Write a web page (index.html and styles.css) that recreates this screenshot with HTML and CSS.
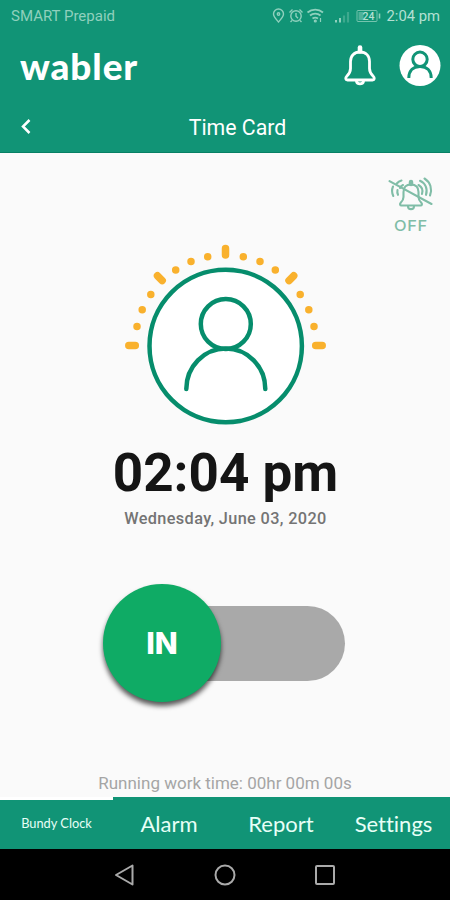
FILE: index.html
```
<!DOCTYPE html>
<html lang="en">
<head>
<meta charset="utf-8">
<title>Time Card</title>
<link rel="stylesheet" href="styles.css">
</head>
<body>
<div class="app">
  <header class="header">
    <div class="status">
      <span class="carrier">SMART Prepaid</span>
      <svg class="status-icons" width="110" height="20" viewBox="0 0 110 20" fill="none" stroke="#8fd0bd" stroke-width="1.4">
        <path d="M6.500 16C3 12 1.500 10.500 1.500 8a5 5 0 0 1 10 0c0 2.500-1.500 4-5 8z"/><circle cx="6.500" cy="8" r="1.200"/>
        <circle cx="24" cy="10" r="5.200"/><path d="M24 7v3.200l2 2M17.500 6.500l3-3M30.500 6.500l-3-3M20 14.500l-1.500 1.500M28 14.500l1.500 1.500"/>
        <path d="M35.500 6.500a12 12 0 0 1 15.500 0M38 9.500a8 8 0 0 1 10.500 0M40.500 12.500a5 5 0 0 1 5.500 0" stroke-width="1.800"/><circle cx="43.300" cy="15" r=".9"/><path d="M48.500 12v4" stroke-width="1.200"/>
        <path d="M64 14v2.500M68 12v4.500" stroke-width="2"/><path d="M72 9.500v7M76 6v10.500" stroke-width="2.200" opacity=".35"/>
        <rect x="85" y="4.500" width="20" height="11" rx="1" stroke-width="1" opacity=".8"/><rect x="86.500" y="6" width="5" height="8" fill="#8fd0bd" stroke="none" opacity=".5"/><path d="M107.500 7.500v5" stroke-width="1.600"/>
        <text class="battery" x="90.500" y="14">24</text>
      </svg>
      <span class="clock">2:04 pm</span>
    </div>
    <div class="brandbar">
      <span class="logo">wabler</span>
      <svg class="bell" width="32" height="42" viewBox="0 0 32 42" fill="none" stroke="#fff" stroke-width="2.800" stroke-linejoin="round" stroke-linecap="round">
        <path d="M16 2.500v4" stroke-width="4.600"/><path d="M16 7c-6 0-9.500 4-9.500 9.500v7c0 4-1.500 5.500-3.500 7.500-2 2-1.500 4 .5 4h25c2 0 2.500-2 .5-4-2-2-3.500-3.500-3.500-7.500v-7C25.500 11 22 7 16 7z"/><path d="M12.500 36.500a3.600 3 0 0 0 7 0"/>
      </svg>
      <svg class="avatar" width="42" height="42" viewBox="0 0 42 42" fill="none" stroke="#119476" stroke-width="3">
        <circle cx="21" cy="20.500" r="20.500" fill="#fff" stroke="none"/><circle cx="21" cy="14.300" r="7.200"/><path d="M9.800 33C9.800 25.500 14.500 21.500 21 21.500S32.200 25.500 32.200 33"/>
      </svg>
    </div>
    <div class="titlebar">
      <svg class="back" width="12" height="16" viewBox="0 0 12 16" fill="none" stroke="#fff" stroke-width="2.500"><path d="M9.500 1 3 7.500 9.500 14"/></svg>
      <h1>Time Card</h1>
    </div>
  </header>
  <main class="main">
    <div class="alarm-state">
      <svg width="46" height="36" viewBox="0 0 46 36" fill="none" stroke="#80bda7" stroke-width="2.100" stroke-linecap="round" stroke-linejoin="round">
        <path d="M23 6v2" stroke-width="4.500"/>
        <path d="M23 8.500c-5 0-7.500 3-7.500 7.500v5c0 3-1 4-2.800 5.800-1.200 1.300-.7 2.700.8 2.700h19c1.500 0 2-1.400.8-2.700-1.800-1.800-2.800-2.800-2.800-5.800v-5c0-4.500-2.500-7.500-7.500-7.500zM20 30.500a3 2.600 0 0 0 6 0"/>
        <path d="M13.500 4.500c-2 .5-3.500 1.500-4.700 3M15 9c-1.500.7-2.500 1.700-3 3M5 10.500c-1.300 3-1.200 6.500.3 9.500M9.500 14c-.4 1.800-.2 3.300.5 4.800"/>
        <path d="M30.500 9c3.300 1.800 4.700 5.300 3.500 9M32 4.800c5.300 2.200 8 8 6 14"/>
        <path d="M36.500 2.500c6 3.800 8 10.500 5.500 17"/>
        <path d="M1.500 5.200 43.500 28"/>
      </svg>
      <span>OFF</span>
    </div>
    <svg class="person" width="210" height="190" viewBox="120 240 210 190" fill="none" stroke="#068d6c" stroke-width="4.500">
      <g stroke="#f9b12d" stroke-width="7.500" stroke-linecap="round">
        <path d="M225.500 248.500v6.500M128.800 345.500h6.500M315.700 345.500h6.500M157.500 275.800l4.700 4.800M293.700 275.800l-4.700 4.800"/>
        <path d="M137 326.500h.01M142.200 309.700h.01M150.800 294.500h.01M175.700 269.900h.01M191 261.500h.01M207.700 256.700h.01M243.300 256.700h.01M260 261.500h.01M275.300 269.900h.01M300.200 294.500h.01M308.800 309.700h.01M314 326.500h.01"/>
      </g>
      <circle cx="225.700" cy="346" r="76.200" fill="#fff"/>
      <circle cx="225.800" cy="324" r="25"/>
      <path d="M186.300 389a39.500 40.500 0 0 1 79 0" stroke-linecap="round"/>
    </svg>
    <div class="time">02:04 pm</div>
    <div class="date">Wednesday, June 03, 2020</div>
    <div class="switch"><div class="knob">IN</div></div>
    <div class="running">Running work time: 00hr 00m 00s</div>
  </main>
  <nav class="tabs">
    <span class="tab active">Bundy Clock</span>
    <span class="tab">Alarm</span>
    <span class="tab">Report</span>
    <span class="tab">Settings</span>
  </nav>
  <footer class="system">
    <svg width="22" height="24" viewBox="0 0 22 24"><path d="M2 12 18.500 2.500v19z"/></svg>
    <svg width="22" height="24" viewBox="0 0 22 24"><circle cx="11" cy="12" r="9.500"/></svg>
    <svg width="22" height="24" viewBox="0 0 22 24"><rect x="2" y="3" width="18" height="18" rx="1"/></svg>
  </footer>
</div>
</body>
</html>
```
FILE: styles.css
```
* { box-sizing: border-box; }
body { margin: 0; font-family: Roboto, sans-serif; }
.app { width: 450px; height: 900px; display: flex; flex-direction: column; background: #fafafa; overflow: hidden; white-space: nowrap; }
.header { height: 153px; background: #119476; color: #fff; border-bottom: 1px solid #078064; }
.status { height: 32px; display: flex; align-items: center; padding: 0 10px 0 11px; font-size: 15px; color: #8fd0bd; }
.carrier { font-size: 15px; }
.status-icons { margin-left: auto; margin-right: 5px; }
.battery { font: 500 10.500px Roboto, sans-serif; fill: #b4e0d3; stroke: none; }
.clock { font-size: 14.800px; color: #b4e0d3; }
.brandbar { height: 68px; display: flex; align-items: center; padding: 0 9px 0 20px; }
.logo { font: 900 36px/40px Lato, sans-serif; letter-spacing: .9px; transform: scaleX(1.025); transform-origin: left; }
.bell { margin-left: auto; margin-right: 23px; }
.titlebar { height: 53px; display: grid; grid-template-columns: 25px 1fr; align-items: center; padding: 0 20px 0 20px; }
h1 { margin: 0; text-align: center; font-size: 21.300px; font-weight: 400; line-height: 30px; padding-top: 2px; }
.main { height: 644px; display: flex; flex-direction: column; align-items: center; }
.alarm-state { align-self: flex-end; width: 46px; height: 87px; margin-right: 16px; padding-top: 23px; display: flex; flex-direction: column; align-items: center; color: #80bda7; }
.alarm-state span { font: 500 14.500px/16px Inter, sans-serif; letter-spacing: .6px; margin-top: 6px; transform: scaleX(1.13); }
.time { margin-top: 13px; margin-left: 1px; height: 60px; line-height: 60px; font-size: 53px; font-weight: 700; color: #151515; }
.date { margin-top: 6px; margin-left: 1px; height: 20px; line-height: 20px; font-size: 16.300px; font-weight: 500; letter-spacing: .36px; color: #747474; }
.switch { width: 240px; height: 75px; margin-top: 77px; border-radius: 38px; background: #a9a9a9; display: flex; align-items: center; }
.knob { flex: none; width: 118px; height: 118px; margin-left: -2px; margin-bottom: 1px; border-radius: 50%; background: #0fab65; color: #fff; display: flex; align-items: center; justify-content: center; font: 800 30px Inter, sans-serif; box-shadow: 0 4px 5px rgba(0,0,0,.65); }
.running { margin-top: 92px; line-height: 20px; font-size: 17px; color: #a5a5a5; }
.tabs { height: 52px; display: grid; grid-template-columns: 113px 112px 112px 113px; background: #119476; color: #e7fff7; font-family: Lato, sans-serif; font-variant-ligatures: none; }
.tab { display: flex; align-items: center; justify-content: center; font-size: 22px; padding-top: 1px; }
.active { border-top: 3px solid #fff; font-size: 12.800px; padding: 0 0 4px; }
.system { height: 51px; background: #000; display: flex; justify-content: center; gap: 78px; align-items: center; }
.system svg { fill: none; stroke: #aaa; stroke-width: 2; stroke-linejoin: round; }
```
